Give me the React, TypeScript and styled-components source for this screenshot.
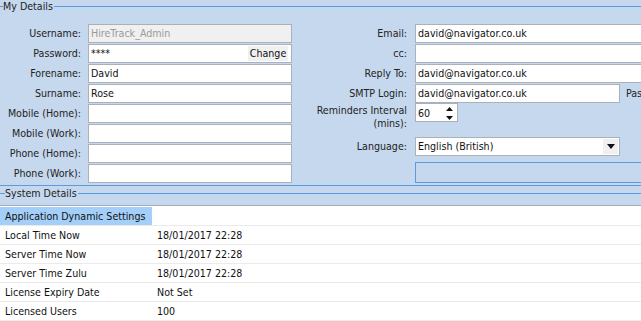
import React from 'react';
import styled, { createGlobalStyle } from 'styled-components';

type Field = {
  label: string;
  value?: string;
  disabled?: boolean;
  button?: string;
  width?: number;
};

const leftFields: Field[] = [
  { label: 'Username:', value: 'HireTrack_Admin', disabled: true },
  { label: 'Password:', value: '****', button: 'Change' },
  { label: 'Forename:', value: 'David' },
  { label: 'Surname:', value: 'Rose' },
  { label: 'Mobile (Home):' },
  { label: 'Mobile (Work):' },
  { label: 'Phone (Home):' },
  { label: 'Phone (Work):' },
];

const rightFields: Field[] = [
  { label: 'Email:', value: 'david@navigator.co.uk', width: 260 },
  { label: 'cc:', width: 260 },
  { label: 'Reply To:', value: 'david@navigator.co.uk', width: 260 },
];

const settings = [
  { name: 'Application Dynamic Settings', value: '', header: true },
  { name: 'Local Time Now', value: '18/01/2017 22:28' },
  { name: 'Server Time Now', value: '18/01/2017 22:28' },
  { name: 'Server Time Zulu', value: '18/01/2017 22:28' },
  { name: 'License Expiry Date', value: 'Not Set' },
  { name: 'Licensed Users', value: '100' },
];

function App() {
  return (
    <Page>
      <GlobalStyle />
      <MyDetails>
        <GroupTitle>
          <Tick $w={3} />
          <TitleText>My Details</TitleText>
          <TitleLine />
        </GroupTitle>
        <Columns>
          <LeftCol>
            {leftFields.map((f) => (
              <FieldRow key={f.label} $label={81} $gap={7}>
                <Label>{f.label}</Label>
                <TextBox $w={204} $disabled={f.disabled}>
                  {f.value}
                  {f.button && <InlineButton>{f.button}</InlineButton>}
                </TextBox>
              </FieldRow>
            ))}
          </LeftCol>
          <RightCol>
            {rightFields.map((f) => (
              <FieldRow key={f.label} $label={107} $gap={8}>
                <Label>{f.label}</Label>
                <TextBox $w={f.width || 204}>{f.value}</TextBox>
              </FieldRow>
            ))}
            <FieldRow $label={107} $gap={8}>
              <Label>SMTP Login:</Label>
              <Inline>
                <TextBox $w={205}>david@navigator.co.uk</TextBox>
                <Label>Password</Label>
              </Inline>
            </FieldRow>
            <FieldRow $label={107} $gap={8} $h={33} $top>
              <TwoLineLabel>
                Reminders Interval
                <br />
                (mins):
              </TwoLineLabel>
              <TextBox $w={43}>
                60
                <Spinner>
                  <svg width="7" height="4" viewBox="0 0 7 4">
                    <path d="M0 4 L3.5 0 L7 4 Z" fill="#111" />
                  </svg>
                  <svg width="7" height="4" viewBox="0 0 7 4">
                    <path d="M0 0 L7 0 L3.5 4 Z" fill="#111" />
                  </svg>
                </Spinner>
              </TextBox>
            </FieldRow>
            <FieldRow $label={107} $gap={8}>
              <Label>Language:</Label>
              <TextBox $w={205}>
                English (British)
                <DropButton>
                  <svg width="8" height="5" viewBox="0 0 8 5">
                    <path d="M0 0 L8 0 L4 5 Z" fill="#111" />
                  </svg>
                </DropButton>
              </TextBox>
            </FieldRow>
            <FieldRow $label={107} $gap={8} $h={27} $top>
              <span />
              <EmptyPanel />
            </FieldRow>
          </RightCol>
        </Columns>
      </MyDetails>
      <SystemHeader>
        <GroupTitle>
          <Tick $w={5} />
          <TitleText>System Details</TitleText>
          <TitleLine />
        </GroupTitle>
      </SystemHeader>
      <Grid>
        {settings.map((s) => (
          <GridRow key={s.name}>
            <Cell $highlight={s.header}>{s.name}</Cell>
            <Cell>{s.value}</Cell>
          </GridRow>
        ))}
      </Grid>
    </Page>
  );
}

const GlobalStyle = createGlobalStyle`
  html, body {
    margin: 0;
    padding: 0;
  }
  body {
    background: #c6d8ee;
    font-family: Tahoma, "DejaVu Sans Condensed", "Liberation Sans", sans-serif;
    font-size: 10.6px;
    color: #1b1b1b;
  }
`;

const Page = styled.div`
  width: 641px;
  height: 321px;
  overflow: hidden;
  display: flex;
  flex-direction: column;
  background: #c6d8ee;
`;

const MyDetails = styled.section`
  height: 185px;
  border-bottom: 1px solid #5b9be1;
  flex-shrink: 0;
`;

const GroupTitle = styled.div`
  display: flex;
  align-items: center;
  height: 13px;
  line-height: 13px;
`;

const Tick = styled.div<{ $w: number }>`
  width: ${(p) => p.$w}px;
  border-top: 1px solid #5b9be1;
`;

const TitleText = styled.span`
  white-space: nowrap;
  padding-right: 1px;
  color: #222;
`;

const TitleLine = styled.div`
  flex: 1;
  border-top: 1px solid #5b9be1;
`;

const Columns = styled.div`
  display: flex;
  padding-top: 10px;
`;

const LeftCol = styled.div`
  width: 300px;
  flex-shrink: 0;
  display: flex;
  flex-direction: column;
`;

const RightCol = styled.div`
  flex: 1;
  display: flex;
  flex-direction: column;
  min-width: 0;
`;

const FieldRow = styled.div<{ $label: number; $gap: number; $h?: number; $top?: boolean }>`
  display: grid;
  grid-template-columns: ${(p) => p.$label}px auto;
  column-gap: ${(p) => p.$gap}px;
  height: ${(p) => p.$h || 20}px;
  align-items: ${(p) => (p.$top ? 'start' : 'center')};
`;

const Label = styled.span`
  text-align: right;
  white-space: nowrap;
  color: #222;
`;

const TwoLineLabel = styled.span`
  text-align: right;
  line-height: 13px;
  padding-top: 1px;
  color: #222;
`;

const Inline = styled.div`
  display: flex;
  align-items: center;
  gap: 6px;
`;

const TextBox = styled.div<{ $w: number; $disabled?: boolean }>`
  position: relative;
  width: ${(p) => p.$w}px;
  height: 19px;
  box-sizing: border-box;
  border: 1px solid #abb1ba;
  background: ${(p) => (p.$disabled ? '#f0f0f0' : '#ffffff')};
  color: ${(p) => (p.$disabled ? '#9a9a9a' : '#111')};
  padding-left: 2px;
  display: flex;
  align-items: center;
  white-space: nowrap;
  overflow: hidden;
  flex-shrink: 0;
`;

const InlineButton = styled.span`
  position: absolute;
  right: 3px;
  top: 1px;
  bottom: 1px;
  width: 40px;
  background: #f0f0f0;
  display: flex;
  align-items: center;
  justify-content: center;
  color: #111;
`;

const Spinner = styled.span`
  position: absolute;
  right: 4px;
  top: 3px;
  display: flex;
  flex-direction: column;
  gap: 5px;
`;

const DropButton = styled.span`
  position: absolute;
  right: 1px;
  top: 1px;
  bottom: 1px;
  width: 15px;
  background: #f0f0f0;
  display: flex;
  align-items: center;
  justify-content: center;
`;

const EmptyPanel = styled.div`
  margin-top: 6px;
  width: 240px;
  height: 21px;
  box-sizing: border-box;
  border: 1px solid #5b9be1;
`;

const SystemHeader = styled.div`
  padding-top: 1px;
  padding-bottom: 5px;
  border-bottom: 1px solid #a3abb7;
  flex-shrink: 0;
`;

const Grid = styled.div`
  flex: 1;
  background: #ffffff;
  padding-top: 1px;
`;

const GridRow = styled.div`
  display: grid;
  grid-template-columns: 152px 1fr;
  height: 19px;
  box-sizing: border-box;
  border-bottom: 1px solid #ebebeb;
`;

const Cell = styled.div<{ $highlight?: boolean }>`
  padding-left: 5px;
  line-height: 18px;
  white-space: nowrap;
  background: ${(p) => (p.$highlight ? '#a3cff8' : 'transparent')};
  color: #111;
`;

export default App;
